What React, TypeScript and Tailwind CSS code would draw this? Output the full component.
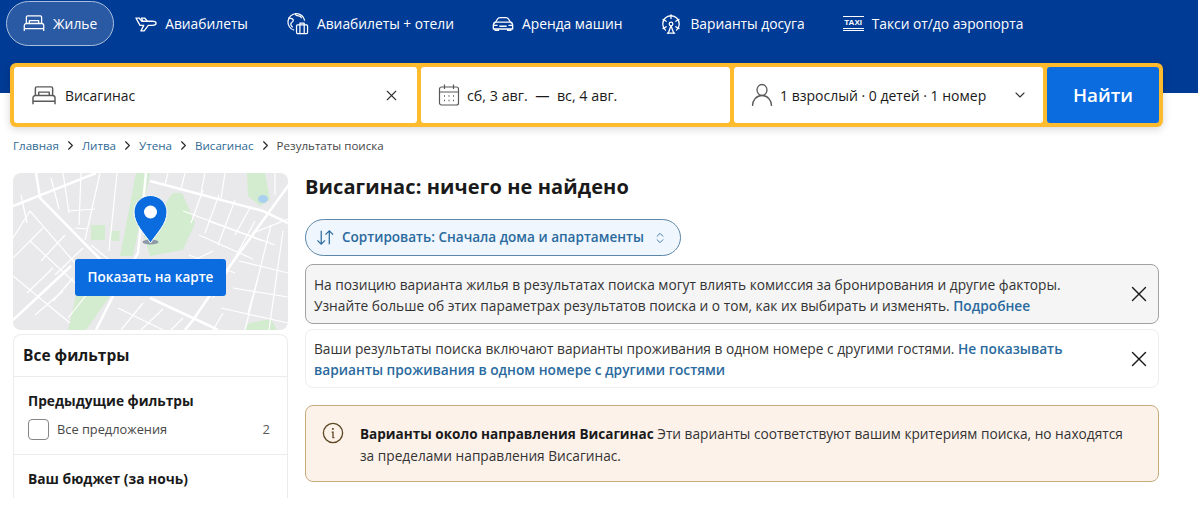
import { ChevronDown, ChevronRight, ChevronsUpDown, FerrisWheel, X } from 'lucide-react';

const crumbs = ['Главная', 'Литва', 'Утена', 'Висагинас'];

// thin street lines on the map picture, in local coords
const minorRoads = [
  'M0 65L17 38L62 90', 'M0 103L57 150', 'M17 68L75 122', 'M0 85L30 55', 'M28 88L52 62', 'M42 102L70 75',
  'M14 120L40 95', 'M22 142L50 118', 'M87 0L72 67', 'M50 0L56 40', 'M68 0L66 52', 'M38 5L46 36', 'M8 22L14 50',
  'M55 38L82 36', 'M62 55L74 56', 'M104 0L96 78', 'M78 72L100 90', 'M60 105L40 128', 'M75 120L55 145',
  'M190 17L178 50', 'M206 22L192 60', 'M222 27L205 72', 'M238 33L222 62', 'M170 38L262 72', 'M186 62L240 86',
  'M176 82L222 100', 'M242 48L200 125', 'M258 52L232 157', 'M270 58L256 157', 'M226 88L275 100', 'M220 115L275 124',
  'M208 135L275 150', 'M150 105L190 122', 'M130 130L108 157', 'M150 136L128 157', 'M170 145L158 157',
  'M105 135L150 157', 'M172 0L168 16', 'M192 0L188 20', 'M212 0L208 26', 'M155 0L152 12', 'M262 0L262 22', 'M240 60L275 46',
  'M200 157L210 140', 'M112 100L136 122', 'M195 48L250 68', 'M182 100L205 110', 'M165 95L200 78', 'M245 105L235 140',
];

function BedIcon({ className }: { className?: string }) {
  return (
    <svg viewBox="0 0 26 24" fill="none" stroke="currentColor" strokeWidth="1.500" strokeLinejoin="round" className={className}>
      <path d="M4 12V4.500A1.500 1.500 0 0 1 5.500 3h15A1.500 1.500 0 0 1 22 4.500V12" />
      <path d="M7.500 12V8.500h11V12" />
      <path d="M1.500 21V14.500A2.500 2.500 0 0 1 4 12h18a2.500 2.500 0 0 1 2.500 2.500V21M1.500 18h23" />
    </svg>
  );
}

function PlaneIcon() {
  return (
    <svg viewBox="0 0 24 24" fill="none" stroke="currentColor" strokeWidth="1.400" strokeLinejoin="round" className="h-[22px] w-[22px]">
      <path d="M1 5.500h3.500L7.500 9H19c2.200 0 4 1 4 2.300s-1.800 2.200-4 2.200h-4.500l-4.500 6H6.500l3-6H5.500L3.500 10z" />
      <path d="M8.500 9L7 5.500h3.500l3 3.500" />
    </svg>
  );
}

function GlobeBagIcon() {
  return (
    <svg viewBox="0 0 24 24" fill="none" stroke="currentColor" strokeWidth="1.300" strokeLinejoin="round" className="h-[23px] w-[23px]">
      <path d="M8.500 19A8.800 8.800 0 1 1 19.500 9" />
      <path d="M2.500 6c2 1 4 .5 5 2s-1 2.500-2 3.500 0 3 1.500 4.500M10 1.500c-.5 2 1 2.500 3 2.500s3 1 3 2.500" />
      <rect x="11" y="13.500" width="11.500" height="9" rx="1" />
      <path d="M14.500 13.500V11.500h4.500v2M14.500 13.500v9M19 13.500v9" />
    </svg>
  );
}

function CarIcon() {
  return (
    <svg viewBox="0 0 24 24" fill="none" stroke="currentColor" strokeWidth="1.500" strokeLinejoin="round" className="h-[22px] w-[22px]">
      <path d="M1.500 13c0-1.700 1-2.700 2.500-3.200l1.800-3C6.400 5.700 7.500 5 9 5h6c1.500 0 2.600.7 3.200 1.800l1.800 3c1.500.5 2.500 1.500 2.500 3.200v4.500h-21z" />
      <path d="M4 10h16M1.500 13.500h4.500M18 13.500h4.500M8 14.500h8M3.500 17.500v1.500h3.500v-1.500M17 17.500v1.500h3.500v-1.500" />
    </svg>
  );
}

function TaxiIcon() {
  return (
    <span className="flex h-[20px] w-[21px] flex-col items-center justify-center">
      <span className="h-px w-full bg-white" />
      <span className="font-['Liberation_Sans',sans-serif] text-[8px] leading-[11px] font-bold text-white">TAXI</span>
      <span className="h-[3px] w-full border-y border-white" />
    </span>
  );
}

function CalendarIcon() {
  return (
    <svg viewBox="0 0 24 24" fill="none" stroke="#595959" strokeWidth="1.200" className="h-[24px] w-[24px]">
      <rect x="2.500" y="4" width="19" height="18" rx="2" />
      <path d="M2.500 9h19M7.500 1.500V6M16.500 1.500V6" />
      <path d="M7 13h1M11.500 13h1M16 13h1M7 17.500h1M11.500 17.500h1M16 17.500h1" strokeWidth="1.600" />
    </svg>
  );
}

function UserIcon() {
  return (
    <svg viewBox="0 0 24 24" fill="none" stroke="#595959" strokeWidth="1.300" className="h-[24px] w-[24px]">
      <ellipse cx="12" cy="7" rx="5" ry="5.500" />
      <path d="M2.500 23c0-6 4-10.500 9.500-10.500S21.500 17 21.500 23" />
    </svg>
  );
}

function SortIcon() {
  return (
    <svg viewBox="0 0 20 20" fill="none" stroke="#2a6a9e" strokeWidth="1.300" className="h-[19px] w-[19px]">
      <path d="M5.500 3v14M1.500 13l4 4 4-4M14 17V3M10 7l4-4 4 4" />
    </svg>
  );
}

function InfoIcon() {
  return (
    <svg viewBox="0 0 24 24" fill="none" stroke="#5a4520" strokeWidth="1.400" className="h-[22px] w-[22px]">
      <circle cx="12" cy="12" r="10.500" />
      <path d="M10.500 11h1.500v6h1.500" />
      <path d="M11.800 7.500h.2" strokeWidth="2" strokeLinecap="round" />
    </svg>
  );
}

function MapPicture() {
  return (
    <svg viewBox="0 0 275 157" className="block h-[157px] w-[275px] blur-[0.4px]">
      <rect width="275" height="157" fill="#e9e9eb" />
      <g fill="#d3ebce">
        <path d="M160 20L169 20L182 50L170 77L137 83L130 60Z" />
        <path d="M123 0L137 0L120 83L107 83Z" />
        <path d="M63 123L97 123L73 157L55 157Z" />
        <path d="M234 0L252 0L257 27L247 33L235 23Z" />
        <path d="M78 52L92 52L92 67L78 67Z" />
        <path d="M98 58L107 58L106 68L98 68Z" />
        <path d="M236 150L258 146L264 157L232 157Z" />
      </g>
      <ellipse cx="250" cy="26" rx="5" ry="4" fill="#a9d0ee" />
      <g fill="none" stroke="#ffffff" strokeWidth="1.200">
        {minorRoads.map((d) => (
          <path key={d} d={d} />
        ))}
      </g>
      <g fill="none" stroke="#ffffff" strokeWidth="2.500">
        <path d="M0 33L83 0" />
        <path d="M23 0L27 25L83 82L100 100" />
        <path d="M133 0L125 80L100 123L83 157" />
        <path d="M137 8L250 38L275 50" />
        <path d="M277 10L217 93L180 147L172 157" />
        <path d="M137 125L197 153L205 157" />
        <path d="M0 147L58 93" />
      </g>
      <ellipse cx="137.500" cy="69" rx="8" ry="2.500" fill="#8e9aa8" />
      <path
        d="M137.500 70C131 60 121 51 121 39a16.500 16.500 0 0 1 33 0C154 51 144 60 137.500 70Z"
        fill="#0a6cdf"
        stroke="#ffffff"
        strokeWidth="1"
      />
      <circle cx="137.500" cy="39" r="6.500" fill="#ffffff" />
    </svg>
  );
}

function NavItem({ icon, label, active }: { icon: React.ReactNode; label: string; active?: boolean }) {
  return (
    <div
      className={
        active
          ? 'flex h-[45px] items-center gap-[8px] rounded-full border border-[#a9bfdd] bg-[#2a5aa3] px-[16px] text-white'
          : 'flex h-[45px] items-center gap-[8px] rounded-full border border-transparent px-[16px] text-white'
      }
    >
      {icon}
      <span className="pt-[2px] text-[13.800px]">{label}</span>
    </div>
  );
}

export default function App() {
  return (
    <div className="h-[522px] w-[1200px] overflow-hidden bg-white font-['Open_Sans','Noto_Sans',sans-serif] text-[#1a1a1a]">
      <header className="h-[93px] w-[1198px] bg-[#003b95] pt-px pl-[6px]">
        <nav className="flex h-[45px] items-center gap-[4px]">
          <NavItem active label="Жилье" icon={<BedIcon className="h-[21px] w-[22px]" />} />
          <NavItem label="Авиабилеты" icon={<PlaneIcon />} />
          <NavItem label="Авиабилеты + отели" icon={<GlobeBagIcon />} />
          <NavItem label="Аренда машин" icon={<CarIcon />} />
          <NavItem label="Варианты досуга" icon={<FerrisWheel className="h-[22px] w-[22px]" strokeWidth={1.400} />} />
          <NavItem label="Такси от/до аэропорта" icon={<TaxiIcon />} />
        </nav>
      </header>

      <div className="mx-[10px] mt-[-30px] flex h-[64px] w-[1153px] gap-[4px] rounded-[6px] bg-[#febb2e] p-[4px] shadow-[0_2px_8px_rgba(0,0,0,0.16)]">
        <div className="flex w-[403px] items-center rounded-[3px] bg-white pr-[17px] pl-[17px]">
          <BedIcon className="h-[23px] w-[26px] text-[#595959]" />
          <span className="ml-[8px] flex-1 pt-[2px] text-[13.900px]">Висагинас</span>
          <X className="h-[17px] w-[17px] text-[#333333]" strokeWidth={1.600} />
        </div>
        <div className="flex w-[309px] items-center rounded-[3px] bg-white pl-[16px]">
          <CalendarIcon />
          <span className="ml-[6px] pt-[1px] text-[14.300px] whitespace-pre">сб, 3 авг.  —  вс, 4 авг.</span>
        </div>
        <div className="flex w-[309px] items-center rounded-[3px] bg-white pr-[15px] pl-[16px]">
          <UserIcon />
          <span className="ml-[6px] flex-1 pt-[1px] text-[14px]">1 взрослый · 0 детей · 1 номер</span>
          <ChevronDown className="h-[16px] w-[16px] text-[#333333]" strokeWidth={1.600} />
        </div>
        <button className="flex-1 rounded-[3px] bg-[#0a6cdf] text-[18.800px] font-semibold text-white">Найти</button>
      </div>

      <div className="mt-[9px] flex h-[20px] items-center pl-[13px] text-[11.600px]">
        {crumbs.map((c) => (
          <span key={c} className="flex items-center">
            <span className="text-[#2f6a94]">{c}</span>
            <ChevronRight className="mx-[4px] h-[15px] w-[15px] text-[#262626]" strokeWidth={1.800} />
          </span>
        ))}
        <span className="text-[#474747]">Результаты поиска</span>
      </div>

      <main className="mt-[17px] flex gap-[17px] pl-[13px]">
        <aside className="w-[275px]">
          <div className="relative h-[157px] overflow-hidden rounded-[8px]">
            <MapPicture />
            <button className="absolute top-[86px] left-[62px] h-[37px] w-[151px] rounded-[3px] bg-[#0a6cdf] text-[13.500px] font-semibold text-white">
              Показать на карте
            </button>
          </div>
          <div className="mt-[4px] h-[164px] overflow-hidden rounded-t-[8px] border-x border-t border-[#ececec]">
            <div className="flex h-[42px] items-center border-b border-[#ececec] px-[9px] pt-[1px] text-[15.500px] font-bold">Все фильтры</div>
            <div className="h-[78px] border-b border-[#ececec] px-[14px] pt-[14px]">
              <div className="text-[13.700px] leading-[20px] font-bold">Предыдущие фильтры</div>
              <div className="mt-[8px] flex items-center">
                <span className="h-[21px] w-[21px] rounded-[4px] border border-[#868686]" />
                <span className="ml-[8px] flex-1 pt-[1px] text-[12.800px] text-[#474747]">Все предложения</span>
                <span className="pt-[1px] pr-[3px] text-[13px] text-[#595959]">2</span>
              </div>
            </div>
            <div className="px-[14px] pt-[14px] text-[13.800px] leading-[20px] font-bold">Ваш бюджет (за ночь)</div>
          </div>
        </aside>

        <section className="w-[854px]">
          <h1 className="h-[28px] text-[20px] leading-[28px] font-bold tracking-[0.1px]">Висагинас: ничего не найдено</h1>
          <div className="mt-[18px] flex h-[37px] w-[376px] items-center rounded-full border border-[#5d87a8] bg-[#f0f6fd] pl-[10px] text-[#2a6a9e]">
            <SortIcon />
            <span className="ml-[7px] flex-1 text-[13.550px] font-semibold whitespace-nowrap">Сортировать: Сначала дома и апартаменты</span>
            <ChevronsUpDown className="mr-[13px] h-[14px] w-[14px]" strokeWidth={1.500} />
          </div>

          <div className="mt-[8px] flex h-[60px] items-center rounded-[8px] border border-[#a2a2a2] bg-[#f5f5f5] pr-[6px] pl-[8px]">
            <p className="flex-1 pt-[1px] text-[13.720px] leading-[21px] text-[#333333]">
              На позицию варианта жилья в результатах поиска могут влиять комиссия за бронирования и другие факторы.
              <br />
              Узнайте больше об этих параметрах результатов поиска и о том, как их выбирать и изменять.{' '}
              <span className="font-semibold text-[#2a6a9e]">Подробнее</span>
            </p>
            <X className="h-[26px] w-[26px] text-[#1a1a1a]" strokeWidth={1.300} />
          </div>

          <div className="mt-[5px] flex h-[59px] items-center rounded-[8px] border border-[#eeeeee] pr-[6px] pl-[8px]">
            <p className="flex-1 pt-[1px] pr-[50px] text-[13.720px] leading-[21px] text-[#333333]">
              Ваши результаты поиска включают варианты проживания в одном номере с другими гостями.{' '}
              <span className="font-semibold text-[#2a6a9e]">Не показывать варианты проживания в одном номере с другими гостями</span>
            </p>
            <X className="h-[26px] w-[26px] text-[#1a1a1a]" strokeWidth={1.300} />
          </div>

          <div className="mt-[17px] flex h-[77px] items-start rounded-[8px] border border-[#c6ac7c] bg-[#fdf2ea] pt-[16px] pl-[16px]">
            <InfoIcon />
            <p className="ml-[16px] flex-1 pt-[1px] pr-[20px] text-[13.700px] leading-[21px] text-[#333333]">
              <span className="text-[13.550px] font-bold text-[#1a1a1a]">Варианты около направления Висагинас</span> Эти варианты соответствуют вашим критериям поиска, но находятся за пределами направления Висагинас.
            </p>
          </div>
        </section>
      </main>
    </div>
  );
}
